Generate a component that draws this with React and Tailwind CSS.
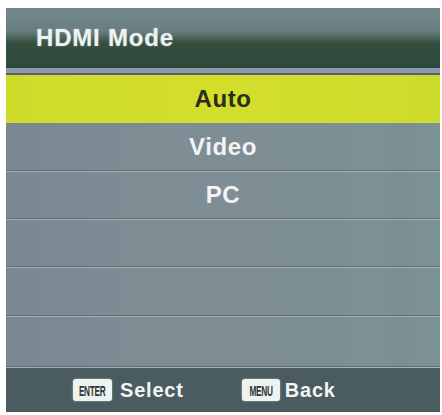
const rows = [
  { label: "Auto", active: true, h: "h-[48px]" },
  { label: "Video", h: "h-[49px]" },
  { label: "PC", h: "h-[48px]" },
  { label: "", h: "h-[48px]" },
  { label: "", h: "h-[49px]" },
  { label: "", h: "h-[51px]" },
];

function KeyBadge({ text, w }) {
  return (
    <div
      className={`${w} h-[22px] flex items-center justify-center overflow-hidden rounded-[3px] bg-[#eef2f0] shadow-[0_0_2px_rgba(255,255,255,0.6)]`}
    >
      <span className="inline-block scale-x-[0.55] text-[15px] font-bold leading-none tracking-[-0.5px] text-[#2a3434]">
        {text}
      </span>
    </div>
  );
}

export default function App() {
  return (
    <div
      className="w-[442px] h-[415px] bg-white pt-[8px] pl-[6px] pr-[2px] pb-[3px]"
      style={{ fontFamily: '"Liberation Sans", Arial, sans-serif' }}
    >
      <div className="flex flex-col h-full">
        {/* title bar */}
        <div className="h-[60px] flex items-center pl-[30px] bg-[linear-gradient(to_bottom,#74888b_0%,#697e80_38%,#52685f_48%,#35503f_58%,#2e483d_100%)]">
          <span className="text-[24px] font-bold tracking-[0.8px] text-[#eef2f2] [text-shadow:0_0_2px_rgba(255,255,255,0.4)]">
            HDMI Mode
          </span>
        </div>
        <div className="h-[5px] bg-[#8d99a8]" />
        <div className="h-[2px] bg-[#55626a]" />

        {/* options */}
        {rows.map((r, i) => (
          <div
            key={i}
            className={`${r.h} flex flex-col ${
              r.active
                ? "bg-[linear-gradient(to_right,#cfdb2a,#d4df2c_50%,#cddb2b)]"
                : "bg-[linear-gradient(to_right,#7b8893,#7f8d94_40%,#7c9193)]"
            }`}
          >
            <div className="flex-1 flex items-center justify-center">
              <span
                className={`text-[24px] font-bold tracking-[0.6px] ${
                  r.active ? "text-[#2b2d1c]" : "text-[#f2f4f4]"
                }`}
              >
                {r.label}
              </span>
            </div>
            {!r.active && (
              <>
                <div className="h-[1px] bg-[#5f6d70]" />
                <div className="h-[1px] bg-[#a3b0b4]" />
              </>
            )}
          </div>
        ))}

        {/* footer */}
        <div className="flex-1 flex items-center pl-[67px] bg-[#4a5c5f]">
          <KeyBadge text="ENTER" w="w-[39px]" />
          <span className="ml-[8px] text-[20px] font-bold tracking-[0.8px] text-[#f2f4f4]">
            Select
          </span>
          <div className="ml-[58px]">
            <KeyBadge text="MENU" w="w-[38px]" />
          </div>
          <span className="ml-[5px] text-[20px] font-bold tracking-[0.8px] text-[#f2f4f4]">
            Back
          </span>
        </div>
      </div>
    </div>
  );
}
